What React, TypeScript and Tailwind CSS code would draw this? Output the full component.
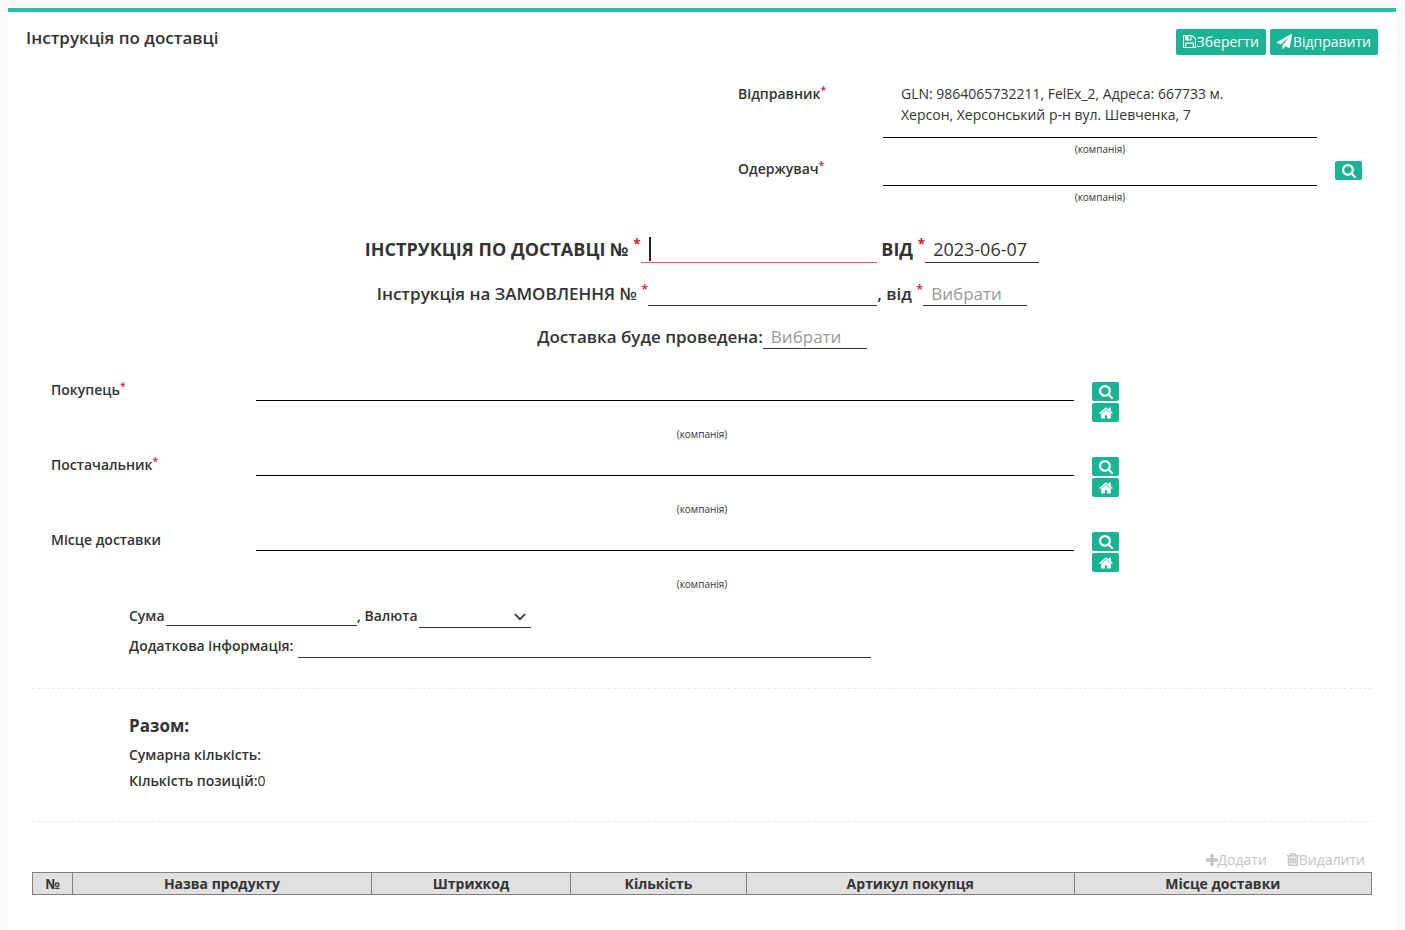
import React from "react";

const ICONS = {
  save: {
    box: "0 128 1536 1536",
    d: "M384 1536h768v-384h-768v384zM1280 1536h128v-896q0-14-10-38.5t-20-34.5l-281-281q-10-10-34-20t-39-10v416q0 40-28 68t-68 28h-576q-40 0-68-28t-28-68v-416h-128v1280h128v-416q0-40 28-68t68-28h832q40 0 68 28t28 68v416zM896 608v-320q0-13-9.5-22.5t-22.5-9.5h-192q-13 0-22.5 9.5t-9.5 22.5v320q0 13 9.5 22.5t22.5 9.5h192q13 0 22.5-9.5t9.5-22.5zM1536 640v928q0 40-28 68t-68 28h-1344q-40 0-68-28t-28-68v-1344q0-40 28-68t68-28h928q40 0 88 20t76 48l280 280q28 28 48 76t20 88z",
  },
  send: {
    box: "0 0 1792 1792",
    d: "M1764 11q33 24 27 64l-256 1536q-5 29-32 45-14 8-31 8-11 0-24-5l-453-185-242 295q-18 23-49 23-13 0-22-4-19-7-30.5-23.5t-11.5-36.5v-349l864-1059-1069 925-395-162q-37-14-40-55-2-40 32-59l1664-960q15-9 32-9 20 0 36 11z",
  },
  search: {
    box: "64 128 1664 1664",
    d: "M1216 832q0-185-131.5-316.5t-316.5-131.5-316.5 131.5-131.5 316.5 131.5 316.5 316.5 131.5 316.5-131.5 131.5-316.5zm512 832q0 52-38 90t-90 38q-54 0-90-38l-343-342q-179 124-399 124-143 0-273.5-55.5t-225-150-150-225-55.5-273.5 55.5-273.5 150-225 225-150 273.5-55.5 273.5 55.5 225 150 150 225 55.5 273.5q0 220-124 399l343 343q37 37 37 90z",
  },
  home: {
    box: "64 64 1664 1664",
    d: "M1472 992v480q0 26-19 45t-45 19h-384v-384h-256v384h-384q-26 0-45-19t-19-45v-480q0-1 .5-3t.5-3l575-474 575 474q1 2 1 6zm223-69l-62 74q-8 9-21 11h-3q-13 0-21-7l-692-577-692 577q-12 8-24 7-13-2-21-11l-62-74q-8-10-7-23.5t11-21.5l719-599q32-26 76-26t76 26l244 204v-195q0-14 9-23t23-9h192q14 0 23 9t9 23v408l219 182q10 8 11 21.5t-7 23.5z",
  },
  plus: {
    box: "192 128 1408 1408",
    d: "M1600 736v192q0 40-28 68t-68 28h-416v416q0 40-28 68t-68 28h-192q-40 0-68-28t-28-68v-416h-416q-40 0-68-28t-28-68v-192q0-40 28-68t68-28h416v-416q0-40 28-68t68-28h192q40 0 68 28t28 68v416h416q40 0 68 28t28 68z",
  },
  trash: {
    box: "192 128 1408 1536",
    d: "M704 736v576q0 14-9 23t-23 9h-64q-14 0-23-9t-9-23v-576q0-14 9-23t23-9h64q14 0 23 9t9 23zm256 0v576q0 14-9 23t-23 9h-64q-14 0-23-9t-9-23v-576q0-14 9-23t23-9h64q14 0 23 9t9 23zm256 0v576q0 14-9 23t-23 9h-64q-14 0-23-9t-9-23v-576q0-14 9-23t23-9h64q14 0 23 9t9 23zm128 724v-948h-896v948q0 22 7 40.5t14.5 27 10.5 8.5h832q3 0 10.5-8.5t14.5-27 7-40.5zm-672-1076h448l-48-117q-7-9-17-11h-317q-10 2-17 11zm928 32v64q0 14-9 23t-23 9h-96v948q0 83-47 143.5t-113 60.5h-832q-66 0-113-58.5t-47-141.5v-952h-96q-14 0-23-9t-9-23v-64q0-14 9-23t23-9h309l70-167q15-37 54-63t79-26h320q40 0 79 26t54 63l70 167h309q14 0 23 9t9 23z",
  },
};

function Icon({ name, className }: { name: keyof typeof ICONS; className: string }) {
  return (
    <svg viewBox={ICONS[name].box} fill="currentColor" aria-hidden="true" className={className}>
      <path d={ICONS[name].d} />
    </svg>
  );
}

function Star() {
  return <sup className="text-[#dc143c]">*</sup>;
}

function IconButton({ name, label }: { name: "search" | "home"; label: string }) {
  return (
    <button
      type="button"
      aria-label={label}
      className="flex h-[19px] w-[27px] items-center justify-center rounded-xs bg-[#1ab394] text-white"
    >
      <Icon name={name} className="size-[14px]" />
    </button>
  );
}

const LINE = "min-w-0 border-b border-[#333] bg-transparent outline-none placeholder:text-[#999]";

function PartyRow({ id, label, required }: { id: string; label: string; required?: boolean }) {
  return (
    <div className="mb-2">
      <div className="flex h-[43px] items-start">
        <label htmlFor={id} className="w-56 shrink-0 pl-[19px] font-semibold">
          {label}
          {required && <Star />}
        </label>
        <input id={id} readOnly className="h-[22px] min-w-0 flex-1 border-b border-black outline-none" />
        <div className="flex w-[298px] shrink-0 flex-col gap-0.5 pt-[3px] pl-[18px]">
          <IconButton name="search" label={"Знайти: " + label} />
          <IconButton name="home" label={"Моя компанія: " + label} />
        </div>
      </div>
      <div className="text-center text-[10px] leading-6">(компанія)</div>
    </div>
  );
}

export default function App() {
  return (
    <div className="min-h-screen bg-[#f9f9fb] px-2 pt-2 pr-[9px] font-['Open_Sans','Noto_Sans',sans-serif] text-sm leading-[21px] text-[#333]">
      <main className="border-t-4 border-[#1fc5a0] bg-white pb-9">
        <header className="flex items-start justify-between pt-[17px] pr-[18px] pl-[18px]">
          <h1 className="text-[17px] leading-[18px] font-semibold">Інструкція по доставці</h1>
          <div className="flex gap-1">
            <button type="button" className="flex h-[26px] items-center rounded-xs bg-[#1ab394] px-[7px] pb-0.5 text-white">
              <Icon name="save" className="mr-px size-[13px]" />
              Зберегти
            </button>
            <button type="button" className="flex h-[26px] items-center rounded-xs bg-[#1ab394] px-[7px] pb-0.5 text-white">
              <Icon name="send" className="mr-px size-[15px]" />
              Відправити
            </button>
          </div>
        </header>

        <div className="px-6 pt-7">
          <section className="ml-auto w-1/2 pl-9">
            <div className="flex">
              <div className="w-[145px] shrink-0 font-semibold">
                Відправник
                <Star />
              </div>
              <div className="min-w-0 flex-1 text-center text-[10px] leading-[21px]">
                <p className="mb-px border-b border-black pr-16 pb-3 pl-[18px] text-left text-sm leading-[21px]">
                  GLN: 9864065732211, FelEx_2, Адреса: 667733 м. Херсон, Херсонський р-н вул. Шевченка, 7
                </p>
                (компанія)
              </div>
              <div className="w-[55px] shrink-0" />
            </div>
            <div className="-mt-0.5 flex">
              <label htmlFor="receiver" className="w-[145px] shrink-0 font-semibold">
                Одержувач
                <Star />
              </label>
              <div className="min-w-0 flex-1 text-center text-[10px] leading-[21px]">
                <input id="receiver" readOnly className="mb-px block h-7 w-full border-b border-black outline-none" />
                (компанія)
              </div>
              <div className="w-[55px] shrink-0 pt-[3px] pl-[18px]">
                <IconButton name="search" label="Знайти одержувача" />
              </div>
            </div>
          </section>

          <section className="mt-[29px] flex flex-col gap-[19px]">
            <div className="flex justify-center text-lg leading-6 font-bold">
              <label htmlFor="number" className="whitespace-pre">
                ІНСТРУКЦІЯ ПО ДОСТАВЦІ № <Star />
              </label>
              <div className="relative flex w-[236px]">
                <input id="number" className="h-[26px] w-full min-w-0 border-b border-[#ed5565] px-2 font-normal outline-none" />
                <span className="absolute top-0 left-2 h-6 w-0.5 bg-[#222]" />
              </div>
              <label htmlFor="date" className="whitespace-pre">
                {" "}ВІД <Star />
              </label>
              <input id="date" defaultValue="2023-06-07" className={LINE + " h-[26px] w-[114px] px-2 pb-px font-normal"} />
            </div>
            <div className="flex justify-center text-[17px] leading-6 font-semibold">
              <label htmlFor="order" className="whitespace-pre">
                Інструкція на ЗАМОВЛЕННЯ № <Star />
              </label>
              <input id="order" className={LINE + " h-6 w-[229px] px-2 font-normal"} />
              <label htmlFor="order-date" className="whitespace-pre">
                , від <Star />
              </label>
              <input id="order-date" placeholder="Вибрати" className={LINE + " h-6 w-[104px] px-2 font-normal"} />
            </div>
            <div className="flex justify-center text-[17px] leading-6 font-semibold">
              <label htmlFor="delivery-date">Доставка буде проведена:</label>
              <input id="delivery-date" placeholder="Вибрати" className={LINE + " h-6 w-[104px] px-2 font-normal"} />
            </div>
          </section>

          <section className="mt-[30px]">
            <PartyRow id="buyer" label="Покупець" required />
            <PartyRow id="supplier" label="Постачальник" required />
            <PartyRow id="place" label="Місце доставки" />
          </section>

          <section className="pl-[97px] font-semibold">
            <div className="flex items-start pt-px">
              <label htmlFor="sum" className="w-[37px]">
                Сума
              </label>
              <input id="sum" className={LINE + " h-[21px] w-[191px]"} />
              <label htmlFor="currency" className="w-[62px] whitespace-pre">
                , Валюта
              </label>
              <div className="relative w-28">
                <select id="currency" className="block h-[23px] w-full appearance-none border-b border-[#333] bg-transparent outline-none">
                  <option value=""></option>
                  <option value="UAH">UAH</option>
                </select>
                <svg viewBox="0 0 12 8" fill="none" stroke="currentColor" strokeWidth="1.7" className="pointer-events-none absolute top-2 right-[5px] h-2 w-3">
                  <path d="M1 1.200 6 6.200l5-5" />
                </svg>
              </div>
            </div>
            <div className="flex items-start pt-[7px]">
              <label htmlFor="info" className="w-[169px]">
                Додаткова інформація:
              </label>
              <input id="info" className={LINE + " h-[23px] w-[573px]"} />
            </div>
          </section>

          <hr className="mt-[30px] border-dashed border-[#e7eaec]" />

          <section className="pt-[25px] pb-[30px] pl-[97px] font-semibold">
            <h2 className="text-[17px] leading-6 font-bold">Разом:</h2>
            <p className="mt-1.5">Сумарна кількість:</p>
            <p className="mt-[5px]">
              Кількість позицій:<span className="font-normal">0</span>
            </p>
          </section>

          <hr className="border-dashed border-[#e7eaec]" />

          <div className="flex justify-end gap-5 pt-[27px] pr-[7px] pb-0.5 text-[#c4c4c4]">
            <button type="button" disabled className="flex items-center">
              <Icon name="plus" className="size-3" />
              Додати
            </button>
            <button type="button" disabled className="flex items-center">
              <Icon name="trash" className="h-[13px] w-3 stroke-current stroke-[60]" />
              Видалити
            </button>
          </div>

          <table className="w-full table-fixed border-collapse">
            <thead>
              <tr className="bg-[#e0e0e0] [&>th]:border [&>th]:border-[#808080] [&>th]:p-0 [&>th]:font-bold">
                <th className="w-[3%]">№</th>
                <th className="w-[22.3%]">Назва продукту</th>
                <th className="w-[14.9%]">Штрихкод</th>
                <th className="w-[13.1%]">Кількість</th>
                <th className="w-[24.5%]">Артикул покупця</th>
                <th>Місце доставки</th>
              </tr>
            </thead>
          </table>
        </div>
      </main>
    </div>
  );
}
